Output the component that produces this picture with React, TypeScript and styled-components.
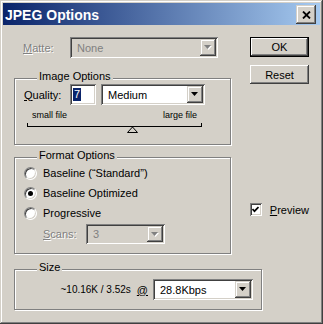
import styled, { createGlobalStyle } from "styled-components";

const Global = createGlobalStyle`
  html, body {
    margin: 0;
    padding: 0;
    background: #d4d0c8;
  }
  body {
    font-family: "Liberation Sans", Arial, sans-serif;
    font-size: 11px;
    color: #000;
  }
`;

const raised = `
  box-shadow: inset -1px -1px 0 #404040, inset 1px 1px 0 #ffffff,
    inset -2px -2px 0 #808080;
`;

const sunken = `
  box-shadow: inset 1px 1px 0 #808080, inset -1px -1px 0 #ffffff,
    inset 2px 2px 0 #404040, inset -2px -2px 0 #d4d0c8;
`;

const Window = styled.div`
  width: 323px;
  height: 324px;
  box-sizing: border-box;
  padding: 3px;
  background: #d4d0c8;
  box-shadow: inset -1px -1px 0 #404040, inset 1px 1px 0 #d4d0c8,
    inset -2px -2px 0 #808080, inset 2px 2px 0 #ffffff;
  display: flex;
  flex-direction: column;
`;

const TitleBar = styled.div`
  height: 22px;
  flex-shrink: 0;
  display: flex;
  align-items: center;
  justify-content: space-between;
  padding: 0 4px 0 2px;
  background: linear-gradient(to right, #0a246a, #a6caf0);
`;

const TitleText = styled.span`
  color: #fff;
  font-weight: bold;
  font-size: 14px;
  margin-top: 2px;
`;

const CloseButton = styled.div`
  width: 20px;
  height: 19px;
  margin-top: 1px;
  background: #d4d0c8;
  box-shadow: inset -1px -1px 0 #404040, inset 1px 1px 0 #d4d0c8,
    inset -2px -2px 0 #808080, inset 2px 2px 0 #ffffff;
  display: flex;
  align-items: center;
  justify-content: center;
`;

const Content = styled.div`
  padding: 12px 0 0 11px;
  display: flex;
  flex-direction: column;
`;

const TopRow = styled.div`
  display: flex;
  gap: 18px;
`;

const LeftCol = styled.div`
  width: 218px;
  display: flex;
  flex-direction: column;
`;

const RightCol = styled.div`
  width: 59px;
  display: flex;
  flex-direction: column;
`;

const Row = styled.div<{ $h?: number; $ml?: number; $mt?: number }>`
  display: flex;
  align-items: center;
  height: ${(p) => p.$h ?? 21}px;
  margin-left: ${(p) => p.$ml ?? 0}px;
  margin-top: ${(p) => p.$mt ?? 0}px;
`;

const Label = styled.span<{ $w?: number; $disabled?: boolean }>`
  width: ${(p) => (p.$w ? `${p.$w}px` : "auto")};
  flex-shrink: 0;
  color: ${(p) => (p.$disabled ? "#808080" : "#000")};
  text-shadow: ${(p) => (p.$disabled ? "1px 1px 0 #ffffff" : "none")};
  white-space: nowrap;
`;

const Group = styled.div<{ $w: number; $mt: number }>`
  width: ${(p) => p.$w - 1}px;
  margin-top: ${(p) => p.$mt}px;
  box-sizing: border-box;
  border: 1px solid #808080;
  box-shadow: 1px 1px 0 #ffffff, inset 1px 1px 0 #ffffff;
  display: flex;
  flex-direction: column;
`;

const Caption = styled.span`
  align-self: flex-start;
  height: 13px;
  line-height: 13px;
  margin: -9px 0 -4px 22px;
  padding: 0 2px;
  background: #d4d0c8;
  white-space: nowrap;
`;

const GroupBody = styled.div<{ $pad: string; $end?: boolean }>`
  display: flex;
  flex-direction: column;
  align-items: ${(p) => (p.$end ? "flex-end" : "flex-start")};
  padding: ${(p) => p.$pad};
`;

const Combo = styled.div<{ $w: number; $h?: number; $disabled?: boolean }>`
  width: ${(p) => p.$w}px;
  height: ${(p) => p.$h ?? 21}px;
  box-sizing: border-box;
  padding: 2px;
  display: flex;
  align-items: stretch;
  background: ${(p) => (p.$disabled ? "#d4d0c8" : "#ffffff")};
  ${sunken}
`;

const ComboText = styled.span<{ $disabled?: boolean }>`
  flex: 1;
  display: flex;
  align-items: center;
  padding-left: 5px;
  color: ${(p) => (p.$disabled ? "#808080" : "#000")};
`;

const ComboButton = styled.div`
  width: 16px;
  background: #d4d0c8;
  box-shadow: inset -1px -1px 0 #404040, inset 1px 1px 0 #d4d0c8,
    inset -2px -2px 0 #808080, inset 2px 2px 0 #ffffff;
  display: flex;
  align-items: center;
  justify-content: center;
`;

const TextBox = styled.div<{ $w: number }>`
  width: ${(p) => p.$w}px;
  height: 21px;
  box-sizing: border-box;
  padding: 4px 3px;
  margin-right: 5px;
  background: #fff;
  display: flex;
  ${sunken}
`;

const Selected = styled.span`
  background: #0a246a;
  color: #fff;
  padding: 0 1px;
  line-height: 13px;
`;

const ScaleLabels = styled.div`
  width: 165px;
  margin: 5px 0 0 8px;
  display: flex;
  justify-content: space-between;
  font-size: 9px;
  line-height: 11px;
`;

const ScaleBracket = styled.div`
  width: 175px;
  height: 4px;
  margin: 2px 0 0 3px;
  box-sizing: border-box;
  border: 1px solid #000;
  border-top: none;
`;

const Thumb = styled.svg`
  display: block;
  margin: -1px 0 0 103px;
`;

const Radio = styled.span<{ $checked?: boolean }>`
  width: 13px;
  height: 13px;
  box-sizing: border-box;
  margin-right: 6px;
  border-radius: 50%;
  background: #fff;
  border: 1px solid;
  border-color: #808080 #ffffff #ffffff #808080;
  box-shadow: inset 1px 1px 0 #404040, inset -1px -1px 0 #d4d0c8;
  display: flex;
  align-items: center;
  justify-content: center;
  &::after {
    content: "";
    display: ${(p) => (p.$checked ? "block" : "none")};
    width: 5px;
    height: 5px;
    border-radius: 50%;
    background: #000;
  }
`;

const Button = styled.div<{ $h: number; $default?: boolean; $mt?: number }>`
  height: ${(p) => p.$h}px;
  margin-top: ${(p) => p.$mt ?? 0}px;
  background: #d4d0c8;
  display: flex;
  align-items: center;
  justify-content: center;
  ${(p) =>
    p.$default
      ? `box-shadow: inset 0 0 0 1px #000, inset -2px -2px 0 #404040,
          inset 2px 2px 0 #ffffff, inset -3px -3px 0 #808080;`
      : raised}
`;

const CheckRow = styled.div`
  display: flex;
  align-items: center;
  margin-top: 119px;
  height: 13px;
`;

const CheckBox = styled.div`
  width: 13px;
  height: 13px;
  box-sizing: border-box;
  margin-right: 8px;
  background: #fff;
  display: flex;
  align-items: center;
  justify-content: center;
  ${sunken}
`;

const SizeText = styled.span`
  font-size: 10px;
  margin-right: 6px;
`;

const At = styled.u`
  margin-right: 5px;
`;

function Arrow({ disabled }: { disabled?: boolean }) {
  return (
    <svg width="8" height="5" viewBox="0 0 8 5">
      {disabled && <polygon points="1,1 8,1 4.5,5" fill="#ffffff" />}
      <polygon points="0,0 7,0 3.5,4" fill={disabled ? "#808080" : "#000"} />
    </svg>
  );
}

function Dropdown(props: { w: number; h?: number; value: string; disabled?: boolean }) {
  return (
    <Combo $w={props.w} $h={props.h} $disabled={props.disabled}>
      <ComboText $disabled={props.disabled}>{props.value}</ComboText>
      <ComboButton>
        <Arrow disabled={props.disabled} />
      </ComboButton>
    </Combo>
  );
}

export default function App() {
  return (
    <>
      <Global />
      <Window>
        <TitleBar>
          <TitleText>JPEG Options</TitleText>
          <CloseButton>
            <svg width="9" height="8" viewBox="0 0 9 8">
              <path d="M1 0.5 L8 7.5 M8 0.5 L1 7.5" stroke="#000" strokeWidth="1.8" />
            </svg>
          </CloseButton>
        </TitleBar>
        <Content>
          <TopRow>
            <LeftCol>
              <Row $ml={9}>
                <Label $w={47} $disabled>
                  <u>M</u>atte:
                </Label>
                <Dropdown w={148} value="None" disabled />
              </Row>

              <Group $w={218} $mt={20}>
                <Caption>Image Options</Caption>
                <GroupBody $pad="5px 0 11px 9px">
                  <Row>
                    <Label $w={46}>
                      <u>Q</u>uality:
                    </Label>
                    <TextBox $w={26}>
                      <Selected>7</Selected>
                    </TextBox>
                    <Dropdown w={104} value="Medium" />
                  </Row>
                  <ScaleLabels>
                    <span>small file</span>
                    <span>large file</span>
                  </ScaleLabels>
                  <ScaleBracket />
                  <Thumb width="11" height="7" viewBox="0 0 11 7">
                    <polygon points="5.5,1 0.5,6.5 10.5,6.5" fill="none" stroke="#000" />
                  </Thumb>
                </GroupBody>
              </Group>

              <Group $w={218} $mt={12}>
                <Caption>Format Options</Caption>
                <GroupBody $pad="5px 0 9px 9px">
                  <Row $h={20}>
                    <Radio />
                    <Label>Baseline (“Standard”)</Label>
                  </Row>
                  <Row $h={20}>
                    <Radio $checked />
                    <Label>Baseline Optimized</Label>
                  </Row>
                  <Row $h={20}>
                    <Radio />
                    <Label>Progressive</Label>
                  </Row>
                  <Row $h={20} $ml={19} $mt={1}>
                    <Label $w={43} $disabled>
                      <u>S</u>cans:
                    </Label>
                    <Dropdown w={79} h={20} value="3" disabled />
                  </Row>
                </GroupBody>
              </Group>
            </LeftCol>

            <RightCol>
              <Button $h={20} $default>
                OK
              </Button>
              <Button $h={19} $mt={8}>
                Reset
              </Button>
              <CheckRow>
                <CheckBox>
                  <svg width="7" height="7" viewBox="0 0 7 7">
                    <polyline points="0.5,3 2.5,5.2 6.5,1" fill="none" stroke="#000" strokeWidth="1.7" />
                  </svg>
                </CheckBox>
                <Label>
                  <u>P</u>review
                </Label>
              </CheckRow>
            </RightCol>
          </TopRow>

          <Group $w={249} $mt={15}>
            <Caption>Size</Caption>
            <GroupBody $pad="9px 8px 9px 0" $end>
              <Row>
                <SizeText>~10.16K / 3.52s</SizeText>
                <At>@</At>
                <Dropdown w={100} value="28.8Kbps" />
              </Row>
            </GroupBody>
          </Group>
        </Content>
      </Window>
    </>
  );
}
